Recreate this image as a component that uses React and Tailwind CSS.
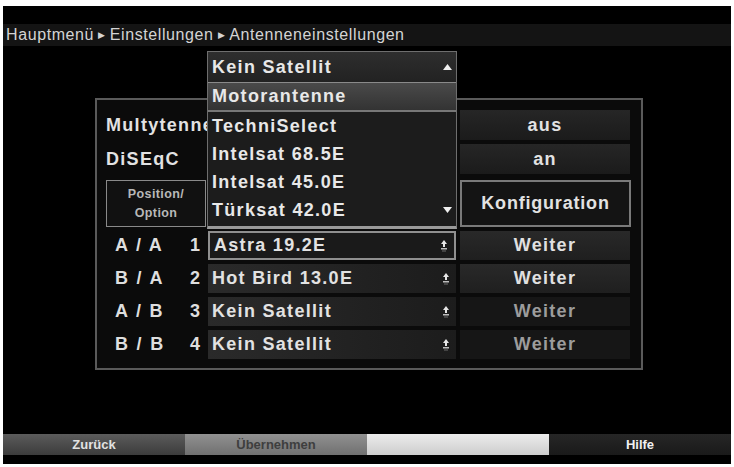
import React from "react";

const font = "font-['Liberation_Sans',Arial,sans-serif]";

function PinIcon() {
  return (
    <svg width="8" height="13" viewBox="0 0 8 13">
      <path d="M4 1 L7 5 L1 5 Z" fill="#e6e6e6" />
      <rect x="3" y="5" width="2" height="3" fill="#e6e6e6" />
      <rect x="1" y="9" width="6" height="1.5" fill="#bdbdbd" />
      <rect x="2" y="11.5" width="4" height="1" fill="#6a6a6a" />
    </svg>
  );
}

function Tri({ up }) {
  return (
    <svg width="9" height="6" viewBox="0 0 9 6">
      <path d={up ? "M4.5 0 L9 6 L0 6 Z" : "M0 0 L9 0 L4.5 6 Z"} fill="#f0f0f0" />
    </svg>
  );
}

const sats = [
  { pos: "A / A", n: "1", name: "Astra 19.2E", active: true, bright: true },
  { pos: "B / A", n: "2", name: "Hot Bird 13.0E", bright: true },
  { pos: "A / B", n: "3", name: "Kein Satellit" },
  { pos: "B / B", n: "4", name: "Kein Satellit" },
];

const options = ["TechniSelect", "Intelsat 68.5E", "Intelsat 45.0E", "Türksat 42.0E"];

export default function App() {
  return (
    <div className={`w-[734px] h-[467px] bg-white pt-[6px] px-[3px] pb-[3px] ${font}`}>
      <div className="relative w-full h-full bg-black flex flex-col overflow-hidden">
        <div className="h-[18px]" />
        <div className="h-[22px] bg-[#141414] flex items-center pl-[3px] text-[16px] leading-none text-[#d4d4d4] tracking-[0.6px] whitespace-nowrap">
          Hauptmenü <span className="mx-[4px] text-[9px]">▶</span> Einstellungen{" "}
          <span className="mx-[4px] text-[9px]">▶</span> Antenneneinstellungen
        </div>

        {/* main panel */}
        <div className="ml-[92px] mt-[52px] w-[548px] h-[272px] border-2 border-[#5a5a5a] bg-[#0b0b0b] pl-[9px] pt-[10px] flex flex-col gap-[4px] text-[18px] font-bold tracking-[1.3px]">
          <div className="flex h-[30px] items-center">
            <div className="w-[102px] text-[#e2e2e2] whitespace-nowrap">Multytenne</div>
            <div className="w-[248px]" />
            <div className="ml-[4px] w-[170px] h-full bg-gradient-to-b from-[#262626] to-[#1b1b1b] flex items-center justify-center text-[#e2e2e2]">
              aus
            </div>
          </div>
          <div className="flex h-[30px] items-center">
            <div className="w-[102px] text-[#e2e2e2]">DiSEqC</div>
            <div className="w-[248px]" />
            <div className="ml-[4px] w-[170px] h-full bg-gradient-to-b from-[#262626] to-[#1b1b1b] flex items-center justify-center text-[#e2e2e2]">
              an
            </div>
          </div>
          <div className="flex h-[47px] items-stretch mt-[2px]">
            <div className="w-[100px] border border-[#8a8a8a] bg-[#111] flex flex-col items-center justify-center text-[12.5px] leading-[19px] tracking-[0.4px] text-[#b8b8b8]">
              <span>Position/</span>
              <span>Option</span>
            </div>
            <div className="w-[250px]" />
            <div className="ml-[4px] w-[171px] border-2 border-[#7a7a7a] bg-[#141414] flex items-center justify-center text-[#e2e2e2] tracking-[0.8px]">
              Konfiguration
            </div>
          </div>
          {sats.map((s) => (
            <div key={s.n} className="flex h-[29px] items-stretch">
              <div className="w-[102px] flex items-center text-[#dedede]">
                <span className="ml-[9px] w-[75px] whitespace-pre tracking-[1.8px]">{s.pos}</span>
                <span>{s.n}</span>
              </div>
              <div
                className={`w-[248px] flex items-center justify-between pl-[4px] pr-[6px] text-[#e2e2e2] ${
                  s.active ? "border-2 border-[#8f8f8f] bg-[#1a1a1a]" : "bg-gradient-to-r from-[#2a2a2a] to-[#1c1c1c]"
                }`}
              >
                <span className="whitespace-nowrap">{s.name}</span>
                <PinIcon />
              </div>
              <div
                className={`ml-[4px] w-[170px] flex items-center justify-center ${
                  s.bright ? "bg-gradient-to-b from-[#292929] to-[#1f1f1f] text-[#e0e0e0]" : "bg-[#161616] text-[#9c9c9c]"
                }`}
              >
                Weiter
              </div>
            </div>
          ))}
        </div>

        <div className="flex-1" />
        {/* colour buttons */}
        <div className="grid grid-cols-4 h-[21px] text-[13px] font-bold leading-none">
          <div className="bg-gradient-to-b from-[#5c5c5c] to-[#3c3c3c] text-[#e2e2e2] flex items-center justify-center">Zurück</div>
          <div className="bg-gradient-to-b from-[#919191] to-[#707070] text-[#3e3e3e] flex items-center justify-center">Übernehmen</div>
          <div className="bg-gradient-to-b from-[#ececec] to-[#cdcdcd]" />
          <div className="bg-gradient-to-b from-[#262626] to-[#1a1a1a] text-[#f0f0f0] flex items-center justify-center">Hilfe</div>
        </div>
        <div className="h-[9px]" />

        {/* open dropdown */}
        <div className="absolute left-[204px] top-[45px] w-[250px] border border-[#6e6e6e] bg-[#1c1c1c] border-b-[3px] border-b-[#9a9a9a] flex flex-col text-[18px] font-bold text-[#e8e8e8] tracking-[1.3px]">
          <div className="h-[31px] flex items-center justify-between pl-[4px] pr-[4px] bg-gradient-to-b from-[#2e2e2e] to-[#222] border-b border-[#8a8a8a]">
            <span>Kein Satellit</span>
            <Tri up />
          </div>
          <div className="h-[29px] flex items-center pl-[4px] bg-gradient-to-b from-[#4a4a4a] to-[#333] border-b-2 border-[#777]">
            Motorantenne
          </div>
          {options.map((o, i) => (
            <div key={o} className="h-[28px] flex items-center justify-between pl-[4px] pr-[4px]">
              <span>{o}</span>
              {i === options.length - 1 && <Tri />}
            </div>
          ))}
          <div className="h-[2px]" />
        </div>
      </div>
    </div>
  );
}
